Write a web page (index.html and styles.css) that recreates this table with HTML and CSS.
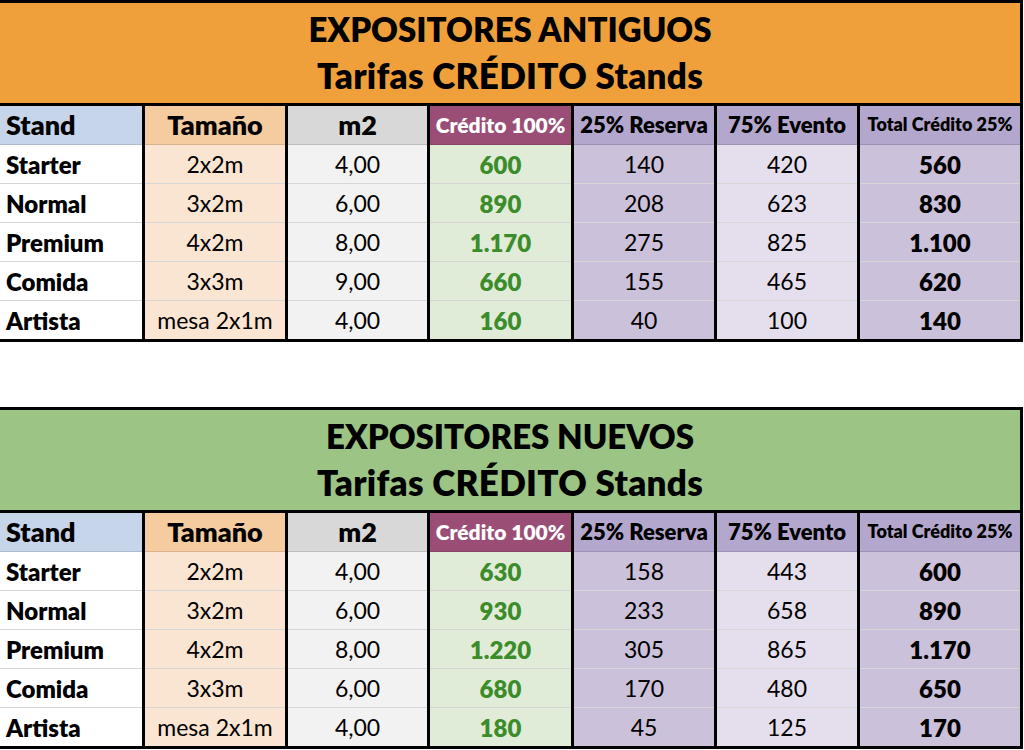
FILE: index.html
```html
<!DOCTYPE html>
<html lang="es">
<head>
<meta charset="utf-8">
<title>Tarifas CRÉDITO Stands</title>
<link rel="stylesheet" href="styles.css">
</head>
<body>
<section class="sheet">
  <div class="title title-old"><span class="t1">EXPOSITORES ANTIGUOS</span><span class="t2">Tarifas CRÉDITO Stands</span></div>
  <div class="grid">
    <div class="cell hd k-stand left">Stand</div>
    <div class="cell hd k-size">Tamaño</div>
    <div class="cell hd k-m2">m2</div>
    <div class="cell hd k-credit hd-credit">Crédito 100%</div>
    <div class="cell hd k-purple">25% Reserva</div>
    <div class="cell hd k-purple">75% Evento</div>
    <div class="cell hd k-purple hd-small">Total Crédito 25%</div>

    <div class="cell b-stand left bold">Starter</div>
    <div class="cell b-size">2x2m</div>
    <div class="cell b-m2">4,00</div>
    <div class="cell b-credit green">600</div>
    <div class="cell b-res">140</div>
    <div class="cell b-evt">420</div>
    <div class="cell b-res bold">560</div>

    <div class="cell b-stand left bold">Normal</div>
    <div class="cell b-size">3x2m</div>
    <div class="cell b-m2">6,00</div>
    <div class="cell b-credit green">890</div>
    <div class="cell b-res">208</div>
    <div class="cell b-evt">623</div>
    <div class="cell b-res bold">830</div>

    <div class="cell b-stand left bold">Premium</div>
    <div class="cell b-size">4x2m</div>
    <div class="cell b-m2">8,00</div>
    <div class="cell b-credit green">1.170</div>
    <div class="cell b-res">275</div>
    <div class="cell b-evt">825</div>
    <div class="cell b-res bold">1.100</div>

    <div class="cell b-stand left bold">Comida</div>
    <div class="cell b-size">3x3m</div>
    <div class="cell b-m2">9,00</div>
    <div class="cell b-credit green">660</div>
    <div class="cell b-res">155</div>
    <div class="cell b-evt">465</div>
    <div class="cell b-res bold">620</div>

    <div class="cell last b-stand left bold">Artista</div>
    <div class="cell last b-size">mesa 2x1m</div>
    <div class="cell last b-m2">4,00</div>
    <div class="cell last b-credit green">160</div>
    <div class="cell last b-res">40</div>
    <div class="cell last b-evt">100</div>
    <div class="cell last b-res bold">140</div>
  </div>
</section>

<section class="sheet sheet-second">
  <div class="title title-new"><span class="t1">EXPOSITORES NUEVOS</span><span class="t2">Tarifas CRÉDITO Stands</span></div>
  <div class="grid">
    <div class="cell hd k-stand left">Stand</div>
    <div class="cell hd k-size">Tamaño</div>
    <div class="cell hd k-m2">m2</div>
    <div class="cell hd k-credit hd-credit">Crédito 100%</div>
    <div class="cell hd k-purple">25% Reserva</div>
    <div class="cell hd k-purple">75% Evento</div>
    <div class="cell hd k-purple hd-small">Total Crédito 25%</div>

    <div class="cell b-stand left bold">Starter</div>
    <div class="cell b-size">2x2m</div>
    <div class="cell b-m2">4,00</div>
    <div class="cell b-credit green">630</div>
    <div class="cell b-res">158</div>
    <div class="cell b-evt">443</div>
    <div class="cell b-res bold">600</div>

    <div class="cell b-stand left bold">Normal</div>
    <div class="cell b-size">3x2m</div>
    <div class="cell b-m2">6,00</div>
    <div class="cell b-credit green">930</div>
    <div class="cell b-res">233</div>
    <div class="cell b-evt">658</div>
    <div class="cell b-res bold">890</div>

    <div class="cell b-stand left bold">Premium</div>
    <div class="cell b-size">4x2m</div>
    <div class="cell b-m2">8,00</div>
    <div class="cell b-credit green">1.220</div>
    <div class="cell b-res">305</div>
    <div class="cell b-evt">865</div>
    <div class="cell b-res bold">1.170</div>

    <div class="cell b-stand left bold">Comida</div>
    <div class="cell b-size">3x3m</div>
    <div class="cell b-m2">6,00</div>
    <div class="cell b-credit green">680</div>
    <div class="cell b-res">170</div>
    <div class="cell b-evt">480</div>
    <div class="cell b-res bold">650</div>

    <div class="cell last b-stand left bold">Artista</div>
    <div class="cell last b-size">mesa 2x1m</div>
    <div class="cell last b-m2">4,00</div>
    <div class="cell last b-credit green">180</div>
    <div class="cell last b-res">45</div>
    <div class="cell last b-evt">125</div>
    <div class="cell last b-res bold">170</div>
  </div>
</section>
</body>
</html>
```

FILE: styles.css
```css
html, body {
  margin: 0;
  padding: 0;
  background: #ffffff;
}

body {
  font-family: Lato, "Noto Sans", "Liberation Sans", sans-serif;
  color: #000;
}

.sheet {
  width: 1023px;
}

.sheet-second {
  margin-top: 65px;
}

.title {
  width: 1020px;
  height: 100px;
  border-top: 3px solid #000;
  border-right: 3px solid #000;
  border-bottom: 3px solid #000;
  display: flex;
  flex-direction: column;
  align-items: center;
  justify-content: center;
  text-align: center;
  font-weight: 800;
  line-height: 46px;
}

.t1 {
  font-size: 33px;
  margin-top: -2px;
}

.t2 {
  font-size: 35px;
  letter-spacing: 0.3px;
}

.title-old {
  background: #f0a03a;
}

.title-new {
  background: #9cc485;
}

.grid {
  display: grid;
  grid-template-columns: 142px 140px 139px 141px 140px 140px 160px;
  column-gap: 3px;
  background: #000;
  border-right: 3px solid #000;
  border-bottom: 3px solid #000;
  width: 1020px;
}

.cell {
  height: 38px;
  border-bottom: 1px solid #d6d6d6;
  display: flex;
  align-items: center;
  justify-content: center;
  font-size: 23px;
  white-space: nowrap;
}

.cell.last {
  border-bottom: 0;
}

.left {
  justify-content: flex-start;
  padding-left: 6px;
}

.bold {
  font-weight: 800;
  font-size: 24px;
}

.green {
  color: #3d8c2b;
  font-weight: 800;
  font-size: 24px;
}

.hd {
  font-weight: 800;
  font-size: 27px;
  border-bottom-color: rgba(0, 0, 0, 0.12);
  padding-bottom: 2px;
  height: 36px;
}

.hd-credit {
  color: #ffffff;
  font-size: 21px;
}

.k-purple {
  font-size: 22px;
}

.hd-small {
  font-size: 18px;
}

/* header fills */
.k-stand { background: #c6d5ea; }
.k-size { background: #f5cba0; }
.k-m2 { background: #d8d8d8; }
.k-credit { background: #9a4e76; }
.k-purple { background: #b4a7cd; }

/* body fills */
.b-stand { background: #ffffff; }
.b-size { background: #fae4d2; }
.b-m2 { background: #f2f2f2; }
.b-credit { background: #e0ecd8; }
.b-res { background: #ccc1db; }
.b-evt { background: #e5dfed; }
```
